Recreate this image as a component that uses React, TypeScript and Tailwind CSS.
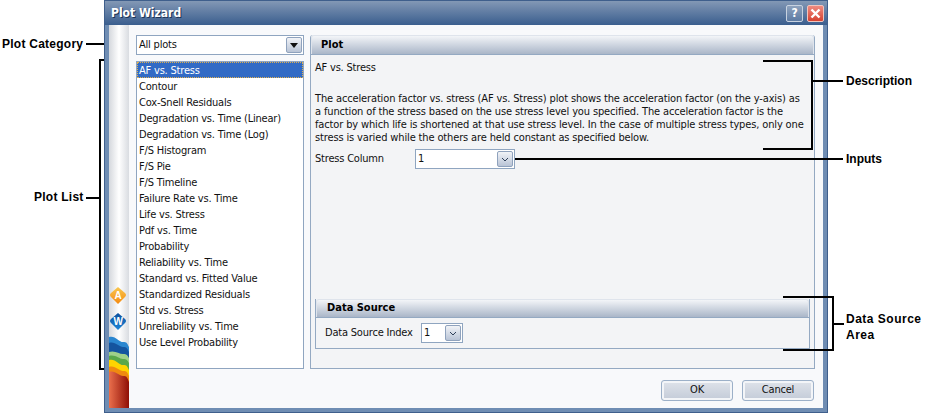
const plots = [
  "AF vs. Stress",
  "Contour",
  "Cox-Snell Residuals",
  "Degradation vs. Time (Linear)",
  "Degradation vs. Time (Log)",
  "F/S Histogram",
  "F/S Pie",
  "F/S Timeline",
  "Failure Rate vs. Time",
  "Life vs. Stress",
  "Pdf vs. Time",
  "Probability",
  "Reliability vs. Time",
  "Standard vs. Fitted Value",
  "Standardized Residuals",
  "Std vs. Stress",
  "Unreliability vs. Time",
  "Use Level Probability",
]

const uiFont = "font-['DejaVu_Sans_Condensed','DejaVu_Sans',sans-serif] text-[11px] tracking-[-0.2px] text-[#111]"
const noteFont = "font-['Liberation_Sans',sans-serif] text-[12px] leading-[16px] font-bold text-black"

function ArrowButton({ solid }: { solid?: boolean }) {
  return (
    <div className="w-[16px] h-[16px] border border-[#8fa2bd] rounded-[2px] bg-gradient-to-b from-[#f1f3f7] to-[#b9c4d6] flex items-center justify-center">
      {solid ? (
        <svg width="8" height="5" viewBox="0 0 8 5">
          <path d="M0 0h8L4 5z" fill="#111" />
        </svg>
      ) : (
        <svg width="8" height="5" viewBox="0 0 8 5" fill="none">
          <path d="M1 1l3 3 3-3" stroke="#30405a" strokeWidth="1" />
        </svg>
      )}
    </div>
  )
}

function Combo({ value, className, solid }: { value: string; className: string; solid?: boolean }) {
  return (
    <div className={`flex items-center justify-between bg-white border border-[#8fa5c0] pl-[2px] pr-[1px] ${className}`}>
      <span>{value}</span>
      <ArrowButton solid={solid} />
    </div>
  )
}

function SectionHeader({ title, className }: { title: string; className: string }) {
  return (
    <div className={`flex items-center rounded-t-[3px] border-t border-x border-[#dfe4ec] bg-gradient-to-b from-[#f3f5f8] to-[#aab6c8] font-bold text-[11px] tracking-[0px] text-black ${className}`}>
      {title}
    </div>
  )
}

function SideStrip() {
  return (
    <div className="relative w-[20px] shrink-0 bg-gradient-to-r from-[#d5d8dd] via-[#ffffff] to-[#d9dce1]">
      <svg className="absolute left-0 top-[262px]" width="20" height="121" viewBox="0 0 20 121">
        <defs>
          <linearGradient id="redBand" x1="0" x2="1" y1="0" y2="0">
            <stop offset="0" stopColor="#ea6f4c" />
            <stop offset="1" stopColor="#8f0f06" />
          </linearGradient>
          <linearGradient id="amber" x1="0" x2="0" y1="0" y2="1">
            <stop offset="0" stopColor="#f9c850" />
            <stop offset="1" stopColor="#f58a10" />
          </linearGradient>
          <linearGradient id="navy" x1="0" x2="0" y1="0" y2="1">
            <stop offset="0" stopColor="#0b4f9e" />
            <stop offset="1" stopColor="#1f86d6" />
          </linearGradient>
        </defs>
        <path d="M9 0l7 6q2 2 0 4l-7 7-7-7q-2-2 0-4z" fill="url(#amber)" />
        <text x="9" y="12" textAnchor="middle" fontSize="10" fontWeight="700" fill="#fff" fontFamily="Liberation Sans, sans-serif">A</text>
        <path d="M9 26l7 6q2 2 0 4l-7 7-7-7q-2-2 0-4z" fill="url(#navy)" />
        <text x="9" y="38" textAnchor="middle" fontSize="10" fontWeight="700" fill="#fff" fontFamily="Liberation Sans, sans-serif">W</text>
        <path d="M0 50C6 48 10 55 14 55S18 56 20 60V121H0z" fill="#2a86d0" />
        <path d="M0 56C6 54 10 60 14 60S18 61 20 65V121H0z" fill="#14549f" />
        <path d="M0 65C6 63 10 67 14 67S18 68 20 71V121H0z" fill="#9fd08a" />
        <path d="M0 69C6 67 10 72 14 72S18 73 20 76V121H0z" fill="#5aa84a" />
        <path d="M0 73C6 71 10 78 14 78S18 79 20 83V121H0z" fill="#ffd400" />
        <path d="M0 80C6 78 10 84 14 84S18 85 20 89V121H0z" fill="#f08a10" />
        <path d="M0 85C6 83 10 89 14 89S18 90 20 95V121H0z" fill="url(#redBand)" />
      </svg>
    </div>
  )
}

function Dialog() {
  return (
    <div className={`ml-[104px] w-[724px] h-[413px] flex flex-col border border-[#3f5f8c] bg-[#6f8db3] ${uiFont}`}>
      <div className="h-[24px] shrink-0 flex items-center justify-between pl-[6px] pr-[3px] bg-gradient-to-b from-[#8398b5] to-[#3a5e8e]">
        <span className="text-white font-bold text-[12px] tracking-[0px] [text-shadow:1px_1px_0_#1d3557]">Plot Wizard</span>
        <div className="flex gap-[4px]">
          <div className="w-[17px] h-[17px] rounded-[2px] border border-[#c7d2e0] bg-gradient-to-b from-[#8ea2bd] to-[#5d7ba3] flex items-center justify-center text-white font-bold text-[12px]">?</div>
          <div className="w-[17px] h-[17px] rounded-[2px] border border-[#f0c4bd] bg-gradient-to-b from-[#ee8a80] to-[#d6402f] flex items-center justify-center">
            <svg width="11" height="11" viewBox="0 0 11 11">
              <path d="M1.5 1.5l8 8M9.5 1.5l-8 8" stroke="#fff" strokeWidth="2.4" />
            </svg>
          </div>
        </div>
      </div>
      <div className="flex-1 flex mx-[4px] mb-[4px] bg-[#f8f9fb] min-w-0">
        <SideStrip />
        <div className="flex-1 min-w-0 flex flex-col pl-[7px] pr-[8px] pt-[10px]">
          <div className="flex gap-[6px] h-[334px]">
            <div className="w-[168px] shrink-0 flex flex-col gap-[6px]">
              <Combo value="All plots" solid className="h-[20px]" />
              <div className="h-[308px] bg-white border border-[#8fa5c0]">
                {plots.map((p, i) => (
                  <div
                    key={p}
                    className={`h-[16px] leading-[17px] px-[2px] ${i === 0 ? "bg-[#316ac5] text-white outline-1 outline-dotted outline-offset-[-1px] outline-[#e0b050]" : ""}`}
                  >
                    {p}
                  </div>
                ))}
              </div>
            </div>
            <div className="flex-1 min-w-0 flex flex-col border border-[#94a9c2] border-t-0 rounded-t-[3px] bg-[#f3f4f6]">
              <SectionHeader title="Plot" className="h-[19px] pl-[9px]" />
              <div className="flex-1 flex flex-col pl-[4px] pr-[4px] border-t border-[#94a9c2]">
                <div className="mt-[6px] leading-[13px]">AF vs. Stress</div>
                <p className="mt-[18px] leading-[13px] whitespace-nowrap tracking-[-0.14px]">
                  The acceleration factor vs. stress (AF vs. Stress) plot shows the acceleration factor (on the y-axis) as
                  <br />
                  a function of the stress based on the use stress level you specified. The acceleration factor is the
                  <br />
                  factor by which life is shortened at that use stress level. In the case of multiple stress types, only one
                  <br />
                  stress is varied while the others are held constant as specified below.
                </p>
                <div className="flex items-center mt-[5px]">
                  <span className="w-[100px]">Stress Column</span>
                  <Combo value="1" className="w-[100px] h-[20px]" />
                </div>
                <div className="mt-auto mb-[19px] flex flex-col h-[50px] border border-t-0 border-[#94a9c2]">
                  <SectionHeader title="Data Source" className="h-[18px] pl-[10px]" />
                  <div className="flex-1 flex items-center pl-[9px] border-t border-[#94a9c2]">
                    <span className="w-[96px]">Data Source Index</span>
                    <Combo value="1" className="w-[42px] h-[20px]" />
                  </div>
                </div>
              </div>
            </div>
          </div>
          <div className="flex justify-end gap-[9px] mt-[11px] pr-[1px]">
            {["OK", "Cancel"].map((label) => (
              <div
                key={label}
                className="w-[72px] h-[21px] rounded-[3px] border border-[#9cb0c8] bg-gradient-to-b from-[#dfe3ea] to-[#c3cbd8] shadow-[inset_0_0_0_2px_#f3f5f8] flex items-center justify-center"
              >
                {label}
              </div>
            ))}
          </div>
        </div>
      </div>
    </div>
  )
}

function Annotations() {
  return (
    <>
      <div className={`absolute left-[2px] top-[36px] tracking-[0.25px] ${noteFont}`}>Plot Category</div>
      <div className="absolute left-[86px] top-[43px] w-[18px] h-[2px] bg-black" />
      <div className="absolute left-[99px] top-[59px] w-[5px] h-[311px] border-l-2 border-y-2 border-black" />
      <div className={`absolute left-[34px] top-[189px] tracking-[0.25px] ${noteFont}`}>Plot List</div>
      <div className="absolute left-[86px] top-[197px] w-[13px] h-[2px] bg-black" />
      <div className="absolute left-[763px] top-[60px] w-[50px] h-[90px] border-r-2 border-y-2 border-black" />
      <div className="absolute left-[813px] top-[80px] w-[30px] h-[2px] bg-black" />
      <div className={`absolute left-[846px] top-[73px] ${noteFont}`}>Description</div>
      <div className="absolute left-[515px] top-[158px] w-[328px] h-[2px] bg-black" />
      <div className={`absolute left-[846px] top-[151px] ${noteFont}`}>Inputs</div>
      <div className="absolute left-[783px] top-[296px] w-[51px] h-[55px] border-r-2 border-y-2 border-black" />
      <div className="absolute left-[834px] top-[323px] w-[10px] h-[2px] bg-black" />
      <div className={`absolute left-[846px] top-[311px] tracking-[0.5px] ${noteFont}`}>
        Data Source
        <br />
        Area
      </div>
    </>
  )
}

export default function App() {
  return (
    <div className="relative w-[926px] h-[413px] overflow-hidden bg-white">
      <Dialog />
      <Annotations />
    </div>
  )
}
